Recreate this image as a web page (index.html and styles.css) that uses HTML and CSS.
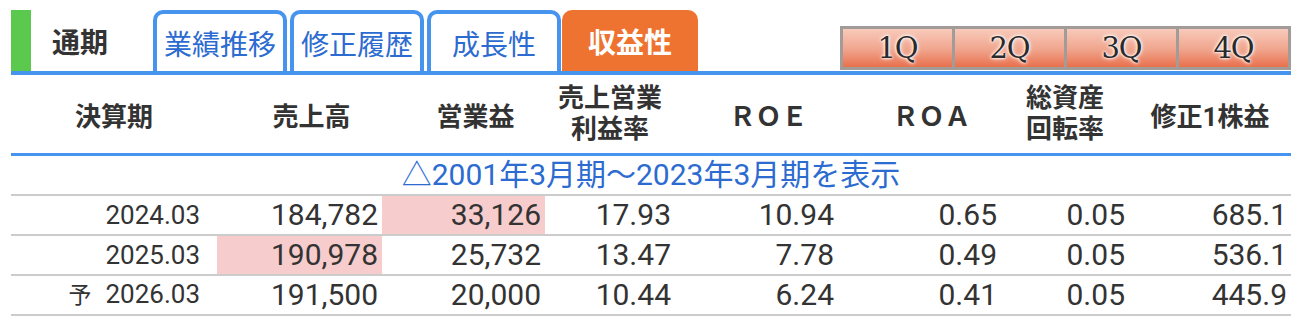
FILE: index.html
```html
<!DOCTYPE html>
<html lang="ja">
<head>
<meta charset="utf-8">
<title>収益性</title>
<link rel="stylesheet" href="styles.css">
</head>
<body>
<div class="page">
  <div class="tabbar">
    <div class="current">通期</div>
    <div class="tab">業績推移</div>
    <div class="tab">修正履歴</div>
    <div class="tab">成長性</div>
    <div class="tab active">収益性</div>
    <div class="qbox">
      <div class="qbtn">1Q</div>
      <div class="qbtn">2Q</div>
      <div class="qbtn">3Q</div>
      <div class="qbtn">4Q</div>
    </div>
  </div>
  <table class="grid">
    <colgroup>
      <col class="c1"><col class="c2"><col class="c3"><col class="c4">
      <col class="c5"><col class="c6"><col class="c7"><col class="c8">
    </colgroup>
    <thead>
      <tr>
        <th>決算期</th>
        <th class="pl">売上高</th>
        <th class="pl">営業益</th>
        <th class="two">売上営業<br>利益率</th>
        <th class="pl">ＲＯＥ</th>
        <th class="pl">ＲＯＡ</th>
        <th class="two">総資産<br>回転率</th>
        <th>修正1株益</th>
      </tr>
    </thead>
    <tbody>
      <tr class="more"><td colspan="8">△2001年3月期～2023年3月期を表示</td></tr>
      <tr>
        <td class="date">2024.03</td>
        <td>184,782</td>
        <td class="hl">33,126</td>
        <td>17.93</td>
        <td>10.94</td>
        <td>0.65</td>
        <td>0.05</td>
        <td>685.1</td>
      </tr>
      <tr>
        <td class="date">2025.03</td>
        <td class="hl">190,978</td>
        <td>25,732</td>
        <td>13.47</td>
        <td>7.78</td>
        <td>0.49</td>
        <td>0.05</td>
        <td>536.1</td>
      </tr>
      <tr>
        <td class="date"><span class="yo">予</span>2026.03</td>
        <td>191,500</td>
        <td>20,000</td>
        <td>10.44</td>
        <td>6.24</td>
        <td>0.41</td>
        <td>0.05</td>
        <td>445.9</td>
      </tr>
    </tbody>
  </table>
</div>
</body>
</html>
```
FILE: styles.css
```css
* { box-sizing: border-box; }
html, body { margin: 0; padding: 0; background: #fff; }
body {
  font-family: Roboto, "Noto Sans CJK JP", sans-serif;
  color: #333;
}
.page {
  width: 1280px;
  margin: 10px 0 0 11px;
}
.tabbar {
  display: flex;
  align-items: flex-end;
  height: 65px;
  border-bottom: 4px solid #4794ee;
}
.current {
  align-self: stretch;
  width: 142px;
  border-left: 20px solid #5bc94e;
  padding-left: 21px;
  display: flex;
  align-items: center;
  font-size: 28px;
  font-weight: bold;
  color: #333;
}
.tab {
  width: 134px;
  height: 61px;
  border: 4px solid #4794ee;
  border-bottom: none;
  border-radius: 10px 10px 0 0;
  display: flex;
  align-items: center;
  justify-content: center;
  font-size: 28px;
  color: #2c6bd0;
}
.tab + .tab { margin-left: 3px; }
.tab.active {
  margin-left: 1px;
  width: 136px;
  border: none;
  background: #ee7330;
  color: #fff;
  font-weight: bold;
  border-radius: 10px 10px 0 0;
}
.qbox {
  margin-left: auto;
  margin-bottom: 1px;
  width: 451px;
  height: 44px;
  display: flex;
  gap: 3px;
  padding: 3px;
  background: #a19c97;
}
.qbtn {
  flex: 1;
  display: flex;
  align-items: center;
  justify-content: center;
  background: linear-gradient(#f8cabb, #f0a48c 55%, #e8704d);
  font-family: "DejaVu Serif", "Liberation Serif", serif;
  font-size: 29px;
  letter-spacing: -1px;
  color: #2a2a2a;
  text-shadow: 0 0 2px #fff, 0 0 3px #fff, 0 0 5px #fff;
}
.grid {
  width: 1280px;
  table-layout: fixed;
  border-collapse: separate;
  border-spacing: 0;
}
.c1 { width: 206px; }
.c2 { width: 165px; }
.c3 { width: 163px; }
.c4 { width: 130px; }
.c5 { width: 163px; }
.c6 { width: 163px; }
.c7 { width: 128px; }
.c8 { width: 162px; }
thead th {
  height: 81px;
  border-bottom: 3px solid #4794ee;
  font-size: 26px;
  font-weight: bold;
  color: #333;
  text-align: center;
  vertical-align: middle;
  padding: 0;
}
thead th.pl { padding-left: 24px; }
thead th.two { line-height: 31px; }
tbody td {
  height: 40px;
  border-bottom: 2px solid #cccccc;
  padding: 0 4px 0 0;
  font-size: 30px;
  text-align: right;
  vertical-align: middle;
  color: #333;
  line-height: 36px;
}
tbody td.date {
  font-size: 26px;
  padding-right: 17px;
}
.yo {
  font-size: 23px;
  margin-right: 14px;
}
tbody td.hl { background: #f6cccc; }
tr.more td {
  text-align: center;
  color: #2c6bd0;
  font-size: 30px;
  padding: 0;
}
```
